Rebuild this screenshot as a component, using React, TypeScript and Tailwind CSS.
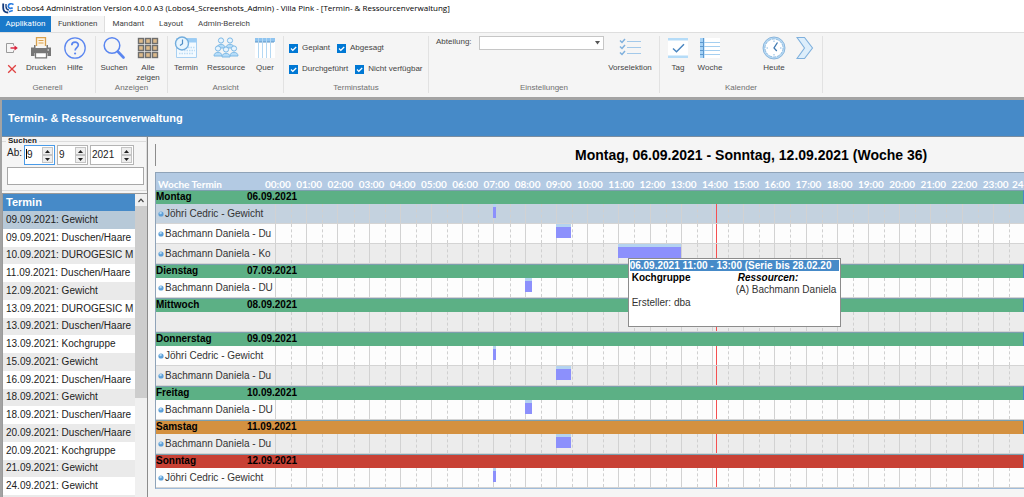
import { ReactNode, useState } from "react"
import clsx from "clsx"

interface Booking {
  start: number
  end: number
  tooltip?: boolean
}

interface ScheduleRow {
  label?: string
  booking?: Booking
}

interface Day {
  name: string
  date: string
  color: string
  rows: ScheduleRow[]
}

const NOW = 14.13

const HOURS = Array.from({ length: 24 }, (_, i) => i)

const DAYS: Day[] = [
  {
    name: "Montag",
    date: "06.09.2021",
    color: "bg-[#5cb085]",
    rows: [
      { label: "Jöhri Cedric - Gewicht", booking: { start: 6.97, end: 7.08 } },
      { label: "Bachmann Daniela - Du", booking: { start: 9, end: 9.5 } },
      { label: "Bachmann Daniela - Ko", booking: { start: 10.98, end: 13, tooltip: true } },
    ],
  },
  {
    name: "Dienstag",
    date: "07.09.2021",
    color: "bg-[#5cb085]",
    rows: [{ label: "Bachmann Daniela - DU", booking: { start: 8, end: 8.25 } }],
  },
  { name: "Mittwoch", date: "08.09.2021", color: "bg-[#5cb085]", rows: [{}] },
  {
    name: "Donnerstag",
    date: "09.09.2021",
    color: "bg-[#5cb085]",
    rows: [
      { label: "Jöhri Cedric - Gewicht", booking: { start: 6.97, end: 7.08 } },
      { label: "Bachmann Daniela - Du", booking: { start: 9, end: 9.5 } },
    ],
  },
  {
    name: "Freitag",
    date: "10.09.2021",
    color: "bg-[#5cb085]",
    rows: [{ label: "Bachmann Daniela - DU", booking: { start: 8, end: 8.25 } }],
  },
  {
    name: "Samstag",
    date: "11.09.2021",
    color: "bg-[#d49140]",
    rows: [{ label: "Bachmann Daniela - Du", booking: { start: 9, end: 9.5 } }],
  },
  {
    name: "Sonntag",
    date: "12.09.2021",
    color: "bg-[#c84135]",
    rows: [{ label: "Jöhri Cedric - Gewicht", booking: { start: 6.97, end: 7.08 } }],
  },
]

const APPOINTMENTS = [
  "09.09.2021: Gewicht",
  "09.09.2021: Duschen/Haare",
  "10.09.2021: DUROGESIC M",
  "11.09.2021: Duschen/Haare",
  "12.09.2021: Gewicht",
  "13.09.2021: DUROGESIC M",
  "13.09.2021: Duschen/Haare",
  "13.09.2021: Kochgruppe",
  "15.09.2021: Gewicht",
  "16.09.2021: Duschen/Haare",
  "18.09.2021: Gewicht",
  "18.09.2021: Duschen/Haare",
  "20.09.2021: Duschen/Haare",
  "20.09.2021: Kochgruppe",
  "21.09.2021: Gewicht",
  "24.09.2021: Gewicht",
]

const percent = (hours: number) => `${(hours / 24) * 100}%`

/* ---------- icons ---------- */

const LogoIcon = () => (
  <svg width="12" height="12" viewBox="0 0 12 12" fill="none">
    <path d="M1.2 1.5v4.2c0 3 2 4.8 5 4.8" stroke="#123a7c" strokeWidth="1.8" />
    <path d="M4 2v2.6c0 2 1 3.2 2.8 3.4" stroke="#123a7c" strokeWidth="1.3" />
    <path d="M11.5 2.6C9.5 1 6.4 1.8 6.3 4.2c0 2 2.4 2.8 4.4 1.6" stroke="#2a7de1" strokeWidth="1.7" />
    <path d="M7 9.8l3.8-1.3" stroke="#2a7de1" strokeWidth="1.5" />
  </svg>
)

const ExitIcon = () => (
  <svg width="12" height="12" viewBox="0 0 12 12" fill="none">
    <path d="M7.500 3.500V1.500h-7v9h7V8.500" stroke="#9a9a9a" />
    <path d="M4.500 6h5" stroke="#d8203a" strokeWidth="1.4" />
    <path d="M8.500 3.500L11.800 6 8.500 8.500z" fill="#d8203a" />
  </svg>
)

const CloseIcon = () => (
  <svg width="10" height="10" viewBox="0 0 10 10" fill="none" stroke="#e04040" strokeWidth="1.3">
    <path d="M1.2 1.2l7.6 7.6M8.8 1.2L1.2 8.8" />
  </svg>
)

const PrinterIcon = () => (
  <svg width="22" height="24" viewBox="0 0 22 24" fill="none">
    <path d="M6.500 10V1.700h9V10" fill="#fdf3e2" stroke="#d9a14e" strokeWidth="1.3" />
    <path d="M8.500 4.500h5M8.500 7h5" stroke="#d9a14e" />
    <path d="M1 11.500h3V9h1.500v3h11V9H18v2.500h3V20h-3.500v-3h-13v3H1z" fill="#777" />
    <path d="M5.500 16.500h11v5.300h-11z" fill="#fff" stroke="#777" strokeWidth="1.3" />
    <path d="M17.500 14h1.500" stroke="#fff" />
  </svg>
)

const HelpIcon = () => (
  <svg width="22" height="24" viewBox="0 0 22 24" fill="none" stroke="#5a86f0">
    <circle cx="11" cy="12" r="10.2" strokeWidth="1.3" />
    <path d="M7.800 9.300c0-4.400 6.600-4.200 6.500-.3 0 2.500-3.200 2.700-3.200 5.500" strokeWidth="1.7" />
    <circle cx="11.1" cy="17.5" r="1.1" fill="#5a86f0" stroke="none" />
  </svg>
)

const SearchIcon = () => (
  <svg width="22" height="24" viewBox="0 0 22 24" fill="none" stroke="#5a86f0">
    <circle cx="9" cy="9.5" r="7.8" strokeWidth="1.5" />
    <path d="M14.800 15.500l5.700 6" strokeWidth="2.6" strokeLinecap="round" />
  </svg>
)

const GridIcon = () => (
  <svg width="22" height="24" viewBox="0 0 22 24">
    {[1.5, 8.5, 15.5].map((y) =>
      [1.5, 8.5, 15.5].map((x) => (
        <rect key={`${x}-${y}`} x={x} y={y + 1} width="5" height="5" fill="#dcb98a" stroke="#6e6e6e" strokeWidth="1.4" />
      ))
    )}
  </svg>
)

const AppointmentIcon = () => (
  <svg width="24" height="24" viewBox="0 0 24 24" fill="none">
    <path d="M2.500 2.500h20v19h-20z" fill="#f3faff" stroke="#a8d0f2" />
    <path d="M12 2.500h10.500v4H12z" fill="#9accf5" />
    <path d="M14 11.500h7M10 14.500h11M5 17.500h14" stroke="#bcdcf5" strokeWidth="1.5" strokeDasharray="1.5 1" />
    <circle cx="8" cy="7.5" r="6.5" fill="#e8f5fe" stroke="#72addd" strokeWidth="1.4" />
    <path d="M8.500 3.500v4.200L6 9.500" stroke="#4f8cc4" strokeWidth="1.2" />
  </svg>
)

const PersonShape = ({ x, y }: { x: number; y: number }) => (
  <g transform={`translate(${x} ${y})`}>
    <circle cx="4" cy="3" r="2.6" fill="#e6f4fe" />
    <path d="M0 10.500C0 5.500 8 5.500 8 10.500z" fill="#b5dcf8" />
  </g>
)

const ResourceIcon = () => (
  <svg width="26" height="24" viewBox="0 0 26 24" fill="none" stroke="#7db9e6">
    <PersonShape x={4} y={1.5} />
    <PersonShape x={13} y={1.5} />
    <PersonShape x={1} y={9.5} />
    <PersonShape x={17} y={9.5} />
    <PersonShape x={9} y={10.5} />
  </svg>
)

const ColumnsIcon = () => (
  <svg width="22" height="24" viewBox="0 0 22 24" fill="none">
    <path d="M1 2h20v20H1z" fill="#fff" />
    <path d="M1 2h20v4H1z" fill="#8fc4f0" />
    <path d="M4.500 2v20M8.500 2v20M12.500 2v20M16.500 2v20" stroke="#b4d8f3" />
    <path d="M1 6h20" stroke="#5c94c4" strokeDasharray="3 1" />
  </svg>
)

const ChecklistIcon = () => (
  <svg width="24" height="24" viewBox="0 0 24 24" fill="none">
    <path d="M9 5.500h14M9 11.500h14M9 17.500h14" stroke="#a3c9ea" strokeWidth="1.2" />
    <path d="M2 4.500L4 6.500 7 3M2 10.500l2 2L7 9M2 16.500l2 2L7 15" stroke="#7fb0dd" strokeWidth="1.5" />
  </svg>
)

const DayIcon = () => (
  <svg width="22" height="24" viewBox="0 0 22 24" fill="none">
    <path d="M1 2h20v20H1z" fill="#fff" />
    <path d="M1 2h20v2.500H1zM1 19.500h20V22H1z" fill="#b5dcf8" />
    <path d="M6 12.500l3.500 3.300L17 8.300" stroke="#4a86c0" strokeWidth="1.5" />
  </svg>
)

const WeekIcon = () => (
  <svg width="22" height="24" viewBox="0 0 22 24" fill="none">
    <path d="M1 2h20v20H1z" fill="#fff" />
    <path d="M1 2h4.500v20H1z" fill="#a5d2f6" />
    <path d="M1 6.500h20M1 10.500h20M1 14.500h20M1 18.500h20" stroke="#a5cff0" />
    <path d="M4.500 2v20M1 6.500h4M1 10.500h4M1 14.500h4M1 18.500h4" stroke="#5c98cf" />
  </svg>
)

const ClockIcon = () => (
  <svg width="24" height="24" viewBox="0 0 24 24" fill="none">
    <circle cx="12" cy="12" r="10" fill="#fff" stroke="#b9dbf5" strokeWidth="2" />
    <circle cx="12" cy="12" r="11" stroke="#7aa9d4" strokeWidth=".8" />
    <circle cx="12" cy="12" r="9" stroke="#7aa9d4" strokeWidth=".7" strokeDasharray="3 1" />
    <path d="M12 4.500v1.500M12 18v1.500M4.500 12H6M18 12h1.500" stroke="#88b8e2" />
    <path d="M15.500 6.500L12 12l2.800 3" stroke="#3f78b0" strokeWidth="1.3" />
  </svg>
)

const NextIcon = () => (
  <svg width="18" height="24" viewBox="0 0 18 24">
    <path d="M1 1.500h7.500L16.500 12l-8 10.500H1L8.500 12z" fill="#ddeefb" stroke="#7fb0dd" strokeWidth="1.1" />
  </svg>
)

/* ---------- ribbon ---------- */

interface ToolButtonProps {
  icon: ReactNode
  label?: string
  title?: string
  className: string
}

const ToolButton = ({ icon, label, title, className }: ToolButtonProps) => (
  <button aria-label={label ?? title} className={clsx("flex flex-col items-center leading-[10px]", className)}>
    <span className="flex h-6 items-center">{icon}</span>
    {label && <span className="mt-[3px]">{label}</span>}
  </button>
)

const RibbonGroup = ({ title, className, children }: { title: string; className: string; children: ReactNode }) => (
  <section className={clsx("mt-[3px] mb-1 flex flex-col justify-between border-r border-[#e2e2e2]", className)}>
    <div className="flex items-start">{children}</div>
    <h2 className="text-center leading-[10px] text-[#707070]">{title}</h2>
  </section>
)

const StatusCheckbox = ({ label }: { label: string }) => {
  const [checked, setChecked] = useState<boolean>(true)

  return (
    <label className="flex items-center gap-1">
      <span className="relative flex">
        <input
          type="checkbox"
          checked={checked}
          onChange={() => setChecked(!checked)}
          className="size-[9px] appearance-none border border-[#0078d4] bg-white checked:bg-[#0078d4]"
        />
        {checked && (
          <svg className="pointer-events-none absolute inset-0" width="9" height="9" viewBox="0 0 9 9" fill="none" stroke="#fff" strokeWidth="1.2">
            <path d="M2 4.500l1.800 1.800L7.200 3" />
          </svg>
        )}
      </span>
      {label}
    </label>
  )
}

const Ribbon = () => (
  <div className="flex h-[65px] border-t border-[#dedede] bg-[#f5f5f5] text-[8px] text-[#444]">
    <RibbonGroup title="Generell" className="w-24">
      <div className="flex w-6 flex-col items-center gap-2.5 pt-1.5">
        <button aria-label="Beenden"><ExitIcon /></button>
        <button aria-label="Schliessen"><CloseIcon /></button>
      </div>
      <ToolButton icon={<PrinterIcon />} label="Drucken" className="w-[34px]" />
      <ToolButton icon={<HelpIcon />} label="Hilfe" className="w-[34px]" />
    </RibbonGroup>
    <RibbonGroup title="Anzeigen" className="w-[72px]">
      <ToolButton icon={<SearchIcon />} label="Suchen" className="w-9" />
      <ToolButton icon={<GridIcon />} label="Alle zeigen" className="w-8" />
    </RibbonGroup>
    <RibbonGroup title="Ansicht" className="w-[116px]">
      <ToolButton icon={<AppointmentIcon />} label="Termin" className="w-9" />
      <ToolButton icon={<ResourceIcon />} label="Ressource" className="w-11" />
      <ToolButton icon={<ColumnsIcon />} label="Quer" className="w-[34px]" />
    </RibbonGroup>
    <RibbonGroup title="Terminstatus" className="w-[145px]">
      <div className="flex flex-col gap-[9px] pt-1.5 pl-[5px] leading-3">
        <div className="flex gap-[7px]">
          <StatusCheckbox label="Geplant" />
          <StatusCheckbox label="Abgesagt" />
        </div>
        <div className="flex gap-[7px]">
          <StatusCheckbox label="Durchgeführt" />
          <StatusCheckbox label="Nicht verfügbar" />
        </div>
      </div>
    </RibbonGroup>
    <RibbonGroup title="Einstellungen" className="w-[231px]">
      <label htmlFor="abteilung" className="w-[50px] pl-[7px] leading-3">Abteilung:</label>
      <div className="relative">
        <select id="abteilung" className="h-3.5 w-[125px] appearance-none border border-[#c6c6c6] bg-white">
          <option value=""></option>
        </select>
        <svg className="pointer-events-none absolute top-[5px] right-1" width="5" height="4" viewBox="0 0 5 4">
          <path d="M0 0h5L2.500 3.500z" fill="#555" />
        </svg>
      </div>
      <ToolButton icon={<ChecklistIcon />} label="Vorselektion" className="w-[52px]" />
    </RibbonGroup>
    <RibbonGroup title="Kalender" className="w-[163px]">
      <ToolButton icon={<DayIcon />} label="Tag" className="w-9" />
      <ToolButton icon={<WeekIcon />} label="Woche" className="w-7" />
      <ToolButton icon={<ClockIcon />} label="Heute" className="ml-8 w-9" />
      <ToolButton icon={<NextIcon />} title="Weiter" className="w-[26px]" />
    </RibbonGroup>
  </div>
)

/* ---------- sidebar ---------- */

interface DateSpinnerProps {
  label: string
  initial: number
  className: string
  focused?: boolean
}

const DateSpinner = ({ label, initial, className, focused }: DateSpinnerProps) => {
  const [value, setValue] = useState<number>(initial)

  return (
    <div className={clsx("flex h-5 border bg-white p-px", focused ? "border-[#4a9be8]" : "border-[#b4b4b4]", className)}>
      {focused && <span className="my-0.5 h-2.5 w-px bg-black" />}
      <input
        aria-label={label}
        value={value}
        onChange={(e) => setValue(Number(e.target.value) || 0)}
        className="h-3.5 w-0 min-w-0 flex-1 outline-none"
      />
      <div className="flex w-[11px] flex-col">
        <button aria-label={`${label} erhöhen`} onClick={() => setValue(value + 1)} className="flex flex-1 items-center justify-center border border-[#c4c4c4] bg-[#eee]">
          <svg width="5" height="3" viewBox="0 0 5 3"><path d="M0 3h5L2.500 0z" fill="#222" /></svg>
        </button>
        <button aria-label={`${label} verringern`} onClick={() => setValue(value - 1)} className="flex flex-1 items-center justify-center border border-[#c4c4c4] bg-[#eee]">
          <svg width="5" height="3" viewBox="0 0 5 3"><path d="M0 0h5L2.500 3z" fill="#222" /></svg>
        </button>
      </div>
    </div>
  )
}

const Sidebar = () => {
  const [selected, setSelected] = useState<number>(0)

  return (
    <aside className="flex w-[146px] shrink-0 flex-col border-r border-[#8c8c8c]">
      <section className="mb-0.5 border-r border-b border-[#dcdcdc] pb-[5px]">
        <h2 className="flex items-center gap-0.5 text-[8px] leading-2 font-bold before:w-1 before:border-t before:border-[#dcdcdc] after:flex-1 after:border-t after:border-[#dcdcdc]">
          Suchen
        </h2>
        <div className="flex gap-0.5 pl-[5px]">
          <span className="w-[15px] pt-0.5 leading-3">Ab:</span>
          <DateSpinner label="Tag" initial={9} className="w-[31px]" focused />
          <DateSpinner label="Monat" initial={9} className="w-[31px]" />
          <DateSpinner label="Jahr" initial={2021} className="w-11" />
        </div>
        <div className="px-[5px] pt-0.5 pr-0.5">
          <input aria-label="Suchen" className="block h-[18px] w-full border border-[#a8a8a8] bg-white px-1 outline-none" />
        </div>
      </section>
      <div className="flex flex-1 border-t border-l border-[#9a9a9a]">
        <table className="flex min-w-0 flex-1 flex-col bg-[#eaeaea] pb-0.5">
          <thead className="flex bg-[#468ac8] text-[11px] text-white">
            <tr>
              <th className="px-[3px] leading-[17px]">Termin</th>
            </tr>
          </thead>
          <tbody className="grid flex-1 auto-rows-fr">
            {APPOINTMENTS.map((appointment, i) => (
              <tr
                key={i}
                onClick={() => setSelected(i)}
                className={clsx(
                  "flex items-center",
                  i === selected ? "bg-[#b7c9d8]" : i % 2 === 0 ? "bg-[#eaeaea]" : "bg-white"
                )}
              >
                <td className="pl-[3px] leading-4 whitespace-nowrap">{appointment}</td>
              </tr>
            ))}
          </tbody>
        </table>
        <div className="flex w-3 flex-col bg-[#f0f0f0]">
          <button aria-label="Nach oben" className="flex h-3 items-center justify-center">
            <svg width="6" height="5" viewBox="0 0 6 5" fill="none" stroke="#444" strokeWidth="1.2"><path d="M.5 4L3 1.200 5.500 4" /></svg>
          </button>
          <div className="h-[192px] bg-[#cdcdcd]" />
        </div>
      </div>
    </aside>
  )
}

/* ---------- schedule ---------- */

const BookingTooltip = () => (
  <div role="tooltip" className="absolute top-[11px] left-2.5 z-10 h-[69px] w-[213px] overflow-hidden border border-[#8c8c8c] bg-white p-px whitespace-nowrap text-[#333]">
    <h3 className="bg-[#468ac8] leading-[11px] font-bold text-white">06.09.2021 11:00 - 13:00 (Serie bis 28.02.20</h3>
    <div className="flex px-0.5 pt-px leading-3">
      <div className="w-[104px]">
        <p className="font-bold text-black">Kochgruppe</p>
        <p className="mt-[13px]">Ersteller: dba</p>
      </div>
      <div>
        <p className="pl-0.5 font-bold text-black italic">Ressourcen:</p>
        <p>(A) Bachmann Daniela</p>
      </div>
    </div>
  </div>
)

interface TimelineRowProps {
  row: ScheduleRow
  background: string
}

const TimelineRow = ({ row, background }: TimelineRowProps) => (
  <div className={clsx("flex h-5", background)}>
    <div className="flex w-[119px] items-center gap-px border-b border-[#d4d4d4] pl-0.5">
      {row.label && (
        <>
          <svg className="shrink-0" width="6" height="6" viewBox="0 0 6 6">
            <circle cx="3" cy="3" r="2.6" fill="#5c9fd8" />
            <circle cx="2.6" cy="2" r="1.2" fill="#b0d6f2" />
          </svg>
          <span className="whitespace-nowrap text-[#333]">{row.label}</span>
        </>
      )}
    </div>
    <div className="relative grid flex-1 grid-cols-24 border-b border-[#d4d4d4]">
      {HOURS.map((hour) => (
        <div key={hour} className="flex border-l border-[#d2d2d2]">
          <div className="ml-[50%] border-l border-dashed border-[#d0d0d0]" />
        </div>
      ))}
      <div className="absolute inset-y-0 w-px bg-[#f55050]" style={{ left: percent(NOW) }} />
      {row.booking && (
        <div
          className="absolute top-0 h-3.5 border-t-[3px] border-[#b4d3f0] bg-[#8c90fc]"
          style={{ left: percent(row.booking.start), width: percent(row.booking.end - row.booking.start) }}
        >
          {row.booking.tooltip && <BookingTooltip />}
        </div>
      )}
    </div>
  </div>
)

const Schedule = () => {
  let index = 0

  return (
    <div className="border-t border-b border-l border-[#8fa3b8] border-b-[#a0bcda]">
      <div className="flex h-[17px] items-end bg-[#b3cae3] font-[Lato,sans-serif] leading-3 font-bold text-white">
        <span className="w-[119px] pl-0.5">Woche Termin</span>
        <div className="grid flex-1 grid-cols-24">
          {HOURS.map((hour) => (
            <span key={hour} className="-ml-2.5">{`${String(hour).padStart(2, "0")}:00`}</span>
          ))}
        </div>
        <span className="-ml-3 w-3">24</span>
      </div>
      {DAYS.map((day) => (
        <section key={day.date}>
          <h3 className={clsx("flex h-3.5 border-t border-r border-t-[#7c9fae] border-r-[#468ac8] leading-3 font-bold text-black", day.color)}>
            <span className="w-[91px]">{day.name}</span>
            <span>{day.date}</span>
          </h3>
          {day.rows.map((row) => {
            const background = index === 0 ? "bg-[#c4d2df]" : index % 2 === 1 ? "bg-[#fdfdfd]" : "bg-[#ececec]"
            index += 1
            return <TimelineRow key={index} row={row} background={background} />
          })}
        </section>
      ))}
    </div>
  )
}

const TABS = ["Funktionen", "Mandant", "Layout", "Admin-Bereich"]

const App = () => {
  const [activeTab, setActiveTab] = useState<string>("Funktionen")

  return (
    <div className="flex min-h-screen flex-col overflow-hidden bg-[#f5f5f5] font-['Liberation_Sans',Arial,sans-serif] text-[10px] text-[#222]">
      <header className="bg-white text-[8px]">
        <div className="flex h-4 items-center gap-[3px] pl-0.5 font-['Open_Sans',sans-serif] leading-4 text-black">
          <LogoIcon />
          <h1>Lobos4 Administration Version 4.0.0 A3 (Lobos4_Screenshots_Admin) - Villa Pink - [Termin- &amp; Ressourcenverwaltung]</h1>
        </div>
        <nav className="flex h-4 font-[Roboto,sans-serif] text-[#444]">
          <button className="w-[51px] bg-[#1979ca] text-white">Applikation</button>
          {TABS.map((tab) => (
            <button
              key={tab}
              onClick={() => setActiveTab(tab)}
              className={clsx("border-r px-[7px]", tab === activeTab ? "border-[#dedede] bg-[#f5f5f5]" : "border-transparent")}
            >
              {tab}
            </button>
          ))}
        </nav>
      </header>
      <Ribbon />
      <div className="flex flex-1 flex-col border-t-[3px] border-l-2 border-[#a3a3a3]">
        <h2 className="border-b border-[#7a8da0] bg-[#468ac8] pl-1.5 text-[11px] leading-9 font-bold text-white">Termin- &amp; Ressourcenverwaltung</h2>
        <div className="flex flex-1 gap-[7px]">
          <Sidebar />
          <main className="min-w-0 flex-1">
            <div className="flex h-[35px] items-center">
              <div className="h-[22px] border-l border-[#8c8c8c]" />
              <h2 className="pl-[419px] text-[14px] leading-5 font-bold whitespace-nowrap text-black">Montag, 06.09.2021 - Sonntag, 12.09.2021 (Woche 36)</h2>
            </div>
            <Schedule />
          </main>
        </div>
      </div>
    </div>
  )
}

export default App
